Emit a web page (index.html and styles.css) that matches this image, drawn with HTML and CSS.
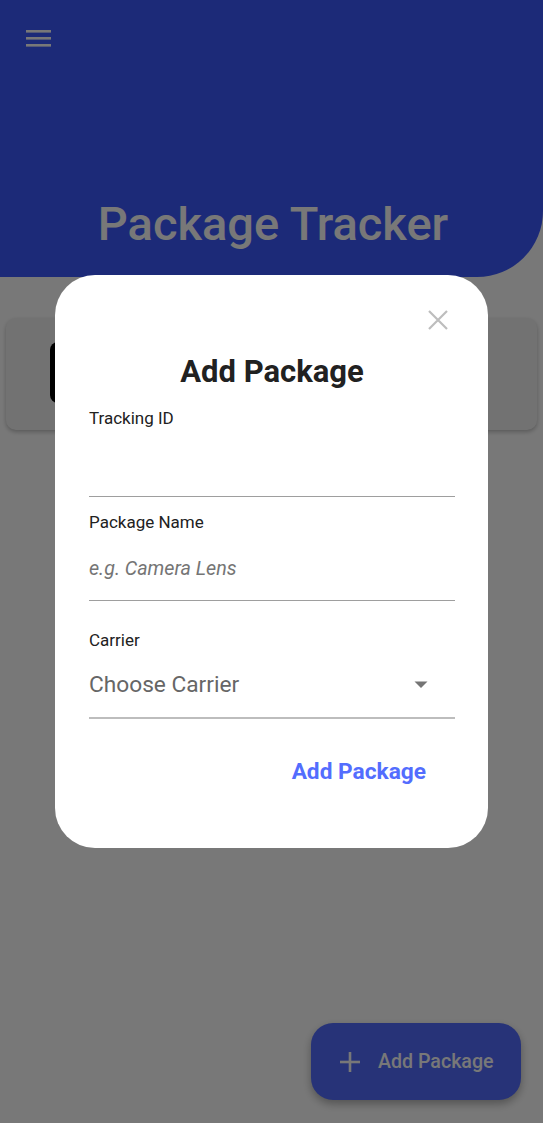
FILE: index.html
```html
<!DOCTYPE html>
<html>
<head>
<meta charset="utf-8">
<link rel="stylesheet" href="styles.css">
</head>
<body>
<div class="app">
  <header class="header">
    <button class="menu" aria-label="menu">
      <svg width="26" height="20" viewBox="0 0 26 20"><rect x="0" y="1" width="25" height="2.6" fill="#fff"/><rect x="0" y="8" width="25" height="2.6" fill="#fff"/><rect x="0" y="15" width="25" height="2.6" fill="#fff"/></svg>
    </button>
    <h1 class="title">Package Tracker</h1>
  </header>
  <main class="content">
    <div class="card">
      <div class="thumb"></div>
    </div>
  </main>
  <button class="fab">
    <svg width="20" height="20" viewBox="0 0 20 20"><rect x="8.7" y="0" width="2.6" height="20" fill="#fff"/><rect x="0" y="8.7" width="20" height="2.6" fill="#fff"/></svg>
    <span>Add Package</span>
  </button>
</div>
<div class="scrim">
  <div class="dialog">
    <div class="dialog-top">
      <button class="close" aria-label="close">
        <svg width="20" height="20" viewBox="0 0 20 20"><path d="M1 1L19 19M19 1L1 19" stroke="#bdbdbd" stroke-width="2.2"/></svg>
      </button>
    </div>
    <h2 class="dialog-title">Add Package</h2>
    <div class="field">
      <label class="label first">Tracking ID</label>
      <div class="input"></div>
    </div>
    <div class="field">
      <label class="label">Package Name</label>
      <div class="input placeholder">e.g. Camera Lens</div>
    </div>
    <div class="field select">
      <label class="label carrier">Carrier</label>
      <div class="input choose"><span>Choose Carrier</span>
        <svg width="14" height="8" viewBox="0 0 14 8"><path d="M0.5 0.5H13.5L7 7Z" fill="#757575"/></svg>
      </div>
    </div>
    <div class="actions">
      <button class="text-btn">Add Package</button>
    </div>
  </div>
</div>
</body>
</html>
```
FILE: styles.css
```css
* { box-sizing: border-box; }
html, body { margin: 0; padding: 0; }
body {
  width: 543px;
  height: 1123px;
  overflow: hidden;
  font-family: Roboto, "Noto Sans", sans-serif;
  background: #ffffff;
}
button { font-family: inherit; border: none; background: none; padding: 0; cursor: pointer; }
.app { position: relative; height: 1123px; }
.header {
  height: 277px;
  background: #3d5afe;
  border-bottom-right-radius: 66px;
  display: flex;
  flex-direction: column;
  padding: 29px 0 0 26px;
}
.menu { width: 26px; height: 20px; display: block; }
.menu svg { display: block; }
.title {
  margin: 0;
  margin-top: 147px;
  padding-right: 23px;
  text-align: center;
  color: #fff;
  font-size: 47px;
  font-weight: 500;
  line-height: 56px;
}
.content { padding: 41px 6px 0 6px; }
.card {
  height: 112px;
  border-radius: 10px;
  background: #f3f3f3;
  box-shadow: 0 2px 4px rgba(0,0,0,0.25);
  padding: 24px 0 0 44px;
}
.thumb { width: 60px; height: 61px; background: #000; border-radius: 8px; }
.fab {
  position: absolute;
  left: 311px;
  top: 1023px;
  width: 210px;
  height: 77px;
  border-radius: 22px;
  background: #536dfe;
  display: flex;
  align-items: center;
  gap: 18px;
  padding-left: 29px;
  color: #fff;
  font-size: 19.6px;
  font-weight: 500;
  box-shadow: 0 4px 8px rgba(0,0,0,0.3);
}
.fab svg { display: block; }
.scrim {
  position: fixed;
  inset: 0;
  background: rgba(0,0,0,0.53);
  display: flex;
  align-items: center;
  justify-content: center;
}
.dialog {
  width: 433px;
  height: 573px;
  background: #fff;
  border-radius: 40px;
  padding: 0 33px 0 34px;
  display: flex;
  flex-direction: column;
}
.dialog-top { display: flex; justify-content: flex-end; padding-top: 35px; padding-right: 7px; }
.close { width: 20px; height: 20px; }
.close svg { display: block; }
.dialog-title {
  margin: 24px 0 0 0;
  text-align: center;
  font-size: 31px;
  font-weight: 700;
  color: #212121;
  line-height: 36px;
}
.field { display: flex; flex-direction: column; border-bottom: 1px solid #9e9e9e; }
.label { font-size: 17px; color: #212121; line-height: 20px; margin-top: 15px; }
.label.first { margin-top: 18px; }
.label.carrier { margin-top: 29px; }
.input { height: 68px; }
.placeholder {
  padding-top: 6px;
  line-height: 62px;
  font-size: 19.7px;
  font-style: italic;
  color: #757575;
}
.select { border-bottom: 2px solid #bdbdbd; }
.choose {
  height: 67px;
  padding-top: 3px;
  line-height: 64px;
  display: flex;
  align-items: center;
  justify-content: space-between;
  font-size: 22.7px;
  color: #666;
  padding-right: 27px;
}
.choose svg { display: block; }
.actions { display: flex; justify-content: flex-end; padding: 39px 29px 0 0; }
.text-btn { font-size: 22.7px; font-weight: 700; color: #536dfe; line-height: 27px; }
```
